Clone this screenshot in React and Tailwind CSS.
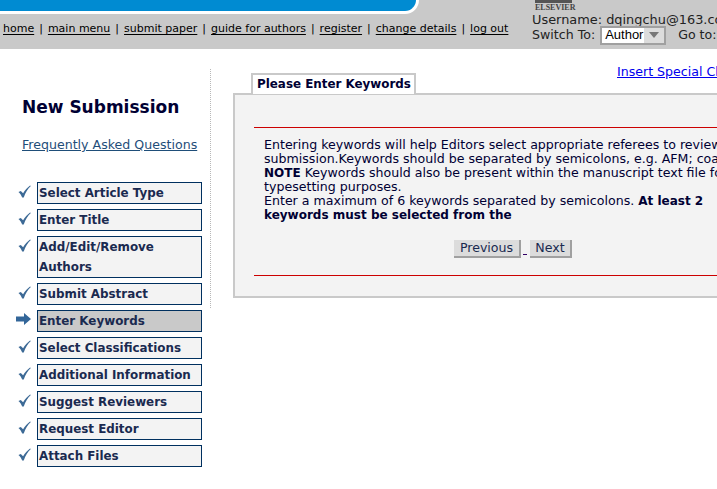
import React from 'react';

const steps = [
  { label: 'Select Article Type' },
  { label: 'Enter Title' },
  { label: 'Add/Edit/Remove Authors', tall: true },
  { label: 'Submit Abstract' },
  { label: 'Enter Keywords', current: true },
  { label: 'Select Classifications' },
  { label: 'Additional Information' },
  { label: 'Suggest Reviewers' },
  { label: 'Request Editor' },
  { label: 'Attach Files' },
];

const links = ['home', 'main menu', 'submit paper', 'guide for authors', 'register', 'change details', 'log out'];

function Check() {
  return (
    <svg width="13" height="13" viewBox="0 0 14 14" className="block">
      <path d="M0.5 7.5 L3 6.5 L5.5 9 C7.5 5.5 10 3 13 0.5 L13.8 1.2 C10.5 4.5 8 8 6.2 13.5 L4.5 13.5 C3.5 11 2.5 9 0.5 7.5 Z" fill="#3d6a96" />
    </svg>
  );
}

function Arrow() {
  return (
    <svg width="15" height="12" viewBox="0 0 15 12" className="block">
      <path d="M0 3.5 H8 V0 L15 6 L8 12 V8.5 H0 Z" fill="#336699" />
    </svg>
  );
}

export default function App() {
  return (
    <div className="w-[717px] h-[489px] overflow-hidden bg-white text-[12.6px] font-['DejaVu_Sans',sans-serif] text-[#000033]">
      <header className="h-[49px] bg-[#c9c9c9] relative flex">
        <div className="absolute left-0 top-0 w-[419px] h-[14px] bg-[#008bd2] border-b-[3px] border-r-[3px] border-white rounded-br-[30px]" />
        <nav className="w-[532px] shrink-0 pt-[21px] pl-[3px] text-[11px] leading-[15px] text-black whitespace-nowrap">
          {links.map((l, i) => (
            <span key={l}>
              {i > 0 && <span className="mx-[5px]">|</span>}
              <span className="underline underline-offset-2">{l}</span>
            </span>
          ))}
        </nav>
        <div className="flex flex-col whitespace-nowrap text-[#222]">
          <div className="ml-[3px] h-[3px] w-[37px] bg-[#555]" />
          <div className="ml-[3px] h-[9px] text-[8px] leading-[9px] font-bold font-['Liberation_Serif',serif] text-[#444]">ELSEVIER</div>
          <div className="text-[12.9px] leading-[15px]">Username: dqingchu@163.com</div>
          <div className="flex items-center h-[18px] -mt-[1px]">
            <span>Switch To:</span>
            <span className="ml-[5px] w-[66px] h-[19px] border-2 border-[#a0a0a0] bg-white flex items-center justify-between text-[12px] text-black">
              <span className="pl-[3px] font-['Liberation_Sans',sans-serif] text-[13px]">Author</span>
              <span className="w-[20px] h-full bg-[#dcdcdc] flex items-center justify-center">
                <span className="w-0 h-0 border-x-[5px] border-x-transparent border-t-[6px] border-t-[#777]" />
              </span>
            </span>
            <span className="ml-[12px]">Go to:</span>
          </div>
        </div>
      </header>

      <div className="flex">
        <aside className="w-[210px] shrink-0">
          <div className="pl-[22px] pt-[47px]">
            <h1 className="text-[17px] leading-[22px] font-bold text-[#000033]">New Submission</h1>
            <a className="block mt-[19px] leading-[16px] underline text-[#1f4e79] whitespace-nowrap">Frequently Asked Questions</a>
          </div>
          <ul className="mt-[29px] flex flex-col gap-[5px] pl-[16px]">
            {steps.map(s => (
              <li key={s.label} className="flex items-start">
                <span className="w-[21px] pt-[3px] pl-[2px] shrink-0">{s.current ? <div className="-ml-[2px]"><Arrow /></div> : <Check />}</span>
                <div className={`w-[165px] border border-[#00305f] pl-[1px] text-[11.9px] font-bold leading-[20px] text-[#1a2a50] ${s.tall ? 'h-[42px]' : 'h-[22px]'} ${s.current ? 'bg-[#c9c9c9]' : 'bg-[#f3f3f3]'}`}>
                  {s.label}
                </div>
              </li>
            ))}
          </ul>
        </aside>

        <div className="mt-[20px] h-[239px] w-0 border-l border-dotted border-[#b8b8b8]" />

        <main className="flex-1 min-w-0 pl-[22px]">
          <div className="flex items-start mt-[24px] h-[20px] relative z-10">
            <div className="ml-[18px] w-[165px] h-[21px] shrink-0 border-2 border-b-0 border-[#c9c9c9] bg-white pl-[4px] text-[11.9px] font-bold leading-[18px] whitespace-nowrap">Please Enter Keywords</div>
            <a className="ml-[201px] -mt-[9px] leading-[16px] underline text-[#0000ee] whitespace-nowrap">Insert Special Characters</a>
          </div>
          <section className="w-[600px] h-[205px] bg-[#f3f3f3] border-2 border-r-0 border-[#c9c9c9] pl-[19px]">
            <div className="mt-[32px] border-t border-[#cc0000]" />
            <div className="pl-[10px] mt-[10px] leading-[14px] w-[480px] text-[#000033]">
              <p className="whitespace-nowrap">Entering keywords will help Editors select appropriate referees to review your</p>
              <p className="whitespace-nowrap">submission.Keywords should be separated by semicolons, e.g. AFM; coal</p>
              <p className="whitespace-nowrap"><b className="text-[12px]">NOTE</b> Keywords should also be present within the manuscript text file for</p>
              <p>typesetting purposes.</p>
              <p className="whitespace-nowrap">Enter a maximum of 6 keywords separated by semicolons. <b className="text-[12px]">At least 2</b></p>
              <p className="font-bold text-[12px]">keywords must be selected from the</p>
            </div>
            <div className="flex items-end mt-[18px] pl-[200px]">
              <button className="w-[67px] h-[18px] bg-[#dcdcdc] border-r-2 border-b-2 border-[#a0a0a0] leading-[16px] text-[#1a2a50]">Previous</button>
              <span className="w-[4px] h-px ml-[2px] mr-[3px] mb-[3px] bg-[#330066]" />
              <button className="w-[42px] h-[18px] bg-[#dcdcdc] border-r-2 border-b-2 border-[#a0a0a0] leading-[16px] text-[#1a2a50]">Next</button>
            </div>
            <div className="mt-[17px] border-t border-[#cc0000]" />
          </section>
        </main>
      </div>
    </div>
  );
}
